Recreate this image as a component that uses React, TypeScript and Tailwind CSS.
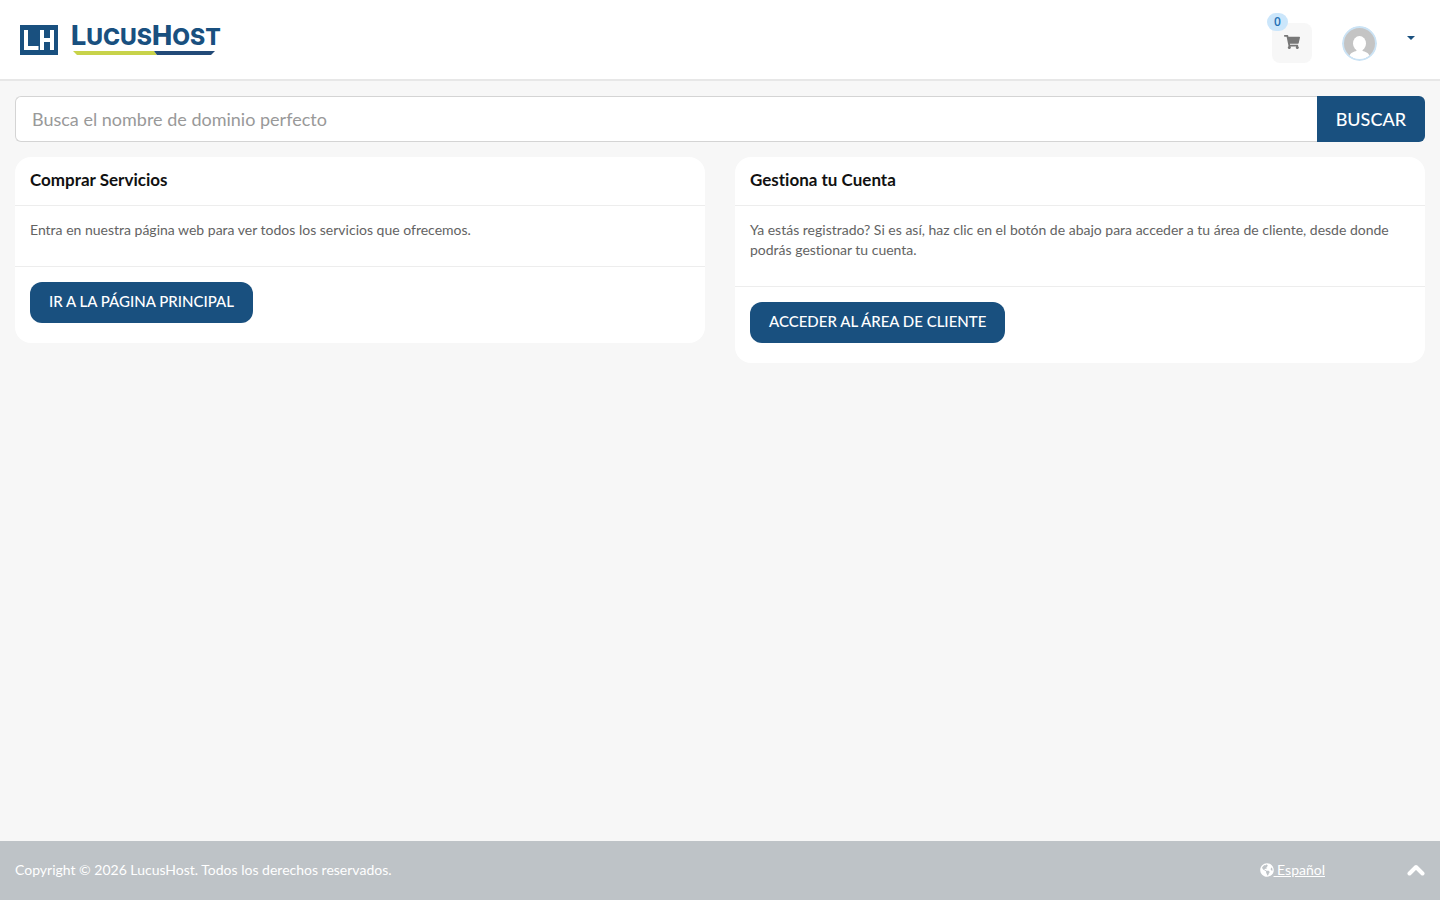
import React from 'react';
import { FaShoppingCart, FaGlobeAmericas } from 'react-icons/fa';

type PanelProps = {
    title: string;
    text: string;
    action: string;
};

const panels: PanelProps[] = [
    {
        title: 'Comprar Servicios',
        text: 'Entra en nuestra página web para ver todos los servicios que ofrecemos.',
        action: 'IR A LA PÁGINA PRINCIPAL',
    },
    {
        title: 'Gestiona tu Cuenta',
        text: 'Ya estás registrado? Si es así, haz clic en el botón de abajo para acceder a tu área de cliente, desde donde podrás gestionar tu cuenta.',
        action: 'ACCEDER AL ÁREA DE CLIENTE',
    },
];

function Logo() {
    return (
        <a href="#" aria-label="LucusHost">
            <svg width="210" height="48" viewBox="0 0 210 48">
                <rect x="0" y="9" width="38" height="30" fill="#19507f" />
                <path d="M4 14H8V30H18.5V34H4Z" fill="#fff" />
                <path d="M20 14H24V22H30V14H34V34H30V26H24V34H20Z" fill="#fff" />
                <text x="51" y="29" fill="#19507f" fontFamily="Inter, sans-serif" fontWeight="800" fontSize="27">
                    L<tspan fontSize="23">UCUS</tspan>H<tspan fontSize="23">OST</tspan>
                </text>
                <path d="M53 35H134L137 39H57Z" fill="#c8d34a" />
                <path d="M134 35H195L191 39H137Z" fill="#224a78" />
            </svg>
        </a>
    );
}

function Avatar() {
    return (
        <svg width="35" height="35" viewBox="0 0 35 35" className="rounded-full">
            <circle cx="17.5" cy="17.5" r="16.5" fill="#c4c4c4" />
            <ellipse cx="17.5" cy="17.5" rx="6.5" ry="7.5" fill="#fff" />
            <path d="M7.5 30C8.5 26.5 12 25.5 14.5 25V22H20.5V25C23 25.5 26.5 26.5 27.5 30Q17.5 37 7.5 30Z" fill="#fff" />
            <circle cx="17.5" cy="17.5" r="16.5" fill="none" stroke="#cbe3f5" strokeWidth="2" />
        </svg>
    );
}

function Panel({ title, text, action }: PanelProps) {
    return (
        <section className="rounded-2xl bg-white">
            <h3 className="border-b border-[#ededed] px-[15px] pt-[11px] pb-[13px] text-[17px] leading-6 font-bold text-[#111]">{title}</h3>
            <p className="border-b border-[#ededed] px-[15px] pt-[14px] pb-[26px] text-sm leading-5 text-[#636363]">{text}</p>
            <div className="px-[15px] pt-[15px] pb-5">
                <a href="#" className="inline-flex h-[41px] items-center rounded-xl bg-[#19507f] px-[19px] pb-0.5 text-[15px] font-medium text-white">
                    {action}
                </a>
            </div>
        </section>
    );
}

export default function App() {
    return (
        <div className="flex min-h-screen flex-col bg-[#f7f7f7] font-[Lato,sans-serif] [font-variant-ligatures:none]">
            <header className="flex h-[81px] items-center justify-between border-b-2 border-[#e7e7e7] bg-white px-5">
                <Logo />
                <div className="flex items-center pr-[5px]">
                    <button aria-label="Carrito" className="relative mt-[7px] flex size-10 items-center justify-center rounded-lg bg-[#f7f7f7] pb-0.5 text-[#777]">
                        <FaShoppingCart size={16} />
                        <span className="absolute -top-[10px] -left-[5px] flex h-[18px] w-[21px] items-center justify-center rounded-full bg-[#cbe6fb] font-['Open_Sans',sans-serif] text-xs font-semibold text-[#2470b5]">0</span>
                    </button>
                    <button aria-label="Cuenta" className="ml-[30px] flex items-center gap-[30px] pt-2">
                        <Avatar />
                        <svg width="8" height="4" viewBox="0 0 8 4" className="mb-3">
                            <path d="M0 0H8L4 4Z" fill="#19507f" />
                        </svg>
                    </button>
                </div>
            </header>

            <main className="flex-1 px-[15px] pt-[15px]">
                <form className="flex h-[46px]">
                    <input
                        type="text"
                        aria-label="Dominio"
                        placeholder="Busca el nombre de dominio perfecto"
                        className="min-w-0 flex-1 rounded-l-md border border-r-0 border-[#d4d4d4] bg-white px-4 text-lg text-[#555] placeholder:text-[#999]"
                    />
                    <button type="button" className="rounded-r-md bg-[#19507f] px-[19px] text-lg font-medium text-white">BUSCAR</button>
                </form>
                <div className="mt-[15px] grid grid-cols-1 items-start gap-[30px] md:grid-cols-2">
                    {panels.map((panel) => (
                        <Panel key={panel.title} {...panel} />
                    ))}
                </div>
            </main>

            <footer className="flex h-[59px] items-center justify-between bg-[#bec3c7] px-[15px] pb-0.5 text-sm text-white">
                <p>Copyright © 2026 LucusHost. Todos los derechos reservados.</p>
                <div className="flex items-center gap-[82px]">
                    <a href="#" className="flex items-center">
                        <FaGlobeAmericas size={14} />
                        <span className="whitespace-pre underline"> Español</span>
                    </a>
                    <a href="#" aria-label="Volver arriba">
                        <svg width="18" height="12" viewBox="0 0 18 12" fill="none" stroke="currentColor" strokeWidth="4" strokeLinecap="round" strokeLinejoin="round">
                            <path d="M2.5 9.5L9 3L15.5 9.5" />
                        </svg>
                    </a>
                </div>
            </footer>
        </div>
    );
}
